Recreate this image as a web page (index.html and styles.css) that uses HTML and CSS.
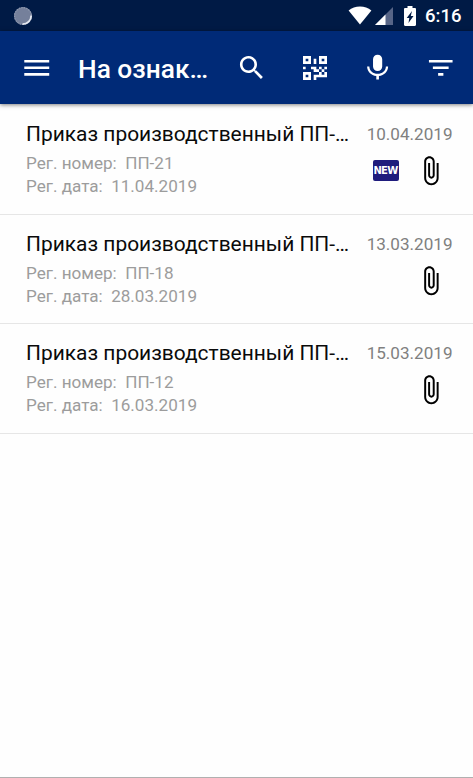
FILE: index.html
```
<!DOCTYPE html>
<html lang="ru">
<head>
    <meta charset="UTF-8">
    <meta name="viewport" content="width=device-width, initial-scale=1.0">
    <title>На ознакомление</title>
    <link rel="stylesheet" href="styles.css">
</head>
<body>
    <!-- Shared icons -->
    <svg class="sprite" width="0" height="0">
        <symbol id="clip" viewBox="0 0 24 24">
            <path d="M16.5 6v11.5c0 2.21-1.79 4-4 4s-4-1.79-4-4V5c0-1.38 1.12-2.5 2.5-2.5s2.5 1.12 2.5 2.5v10.5c0 .55-.45 1-1 1s-1-.45-1-1V6H10v9.5c0 1.38 1.12 2.5 2.5 2.5s2.5-1.12 2.5-2.5V5c0-2.21-1.79-4-4-4S7 2.79 7 5v12.5c0 3.04 2.46 5.5 5.5 5.5s5.5-2.46 5.5-5.5V6h-1.5z"/>
        </symbol>
    </svg>

    <div class="status-bar">
        <svg class="sync" viewBox="0 0 20 20">
            <circle cx="10" cy="10" r="9" fill="#75809b"/>
            <circle cx="10" cy="10" r="8.4" fill="none" stroke="#8d97ad" stroke-width="1.2" stroke-dasharray="1.5 1"/>
            <path d="M18.2 9.5A8.6 8.6 0 0 1 9.5 18.2" fill="none" stroke="#e4e8f0" stroke-width="1.8"/>
        </svg>
        <svg class="wifi" viewBox="0 0 24 19">
            <path d="M12 18.5L.6 4.6C3.7 2 7.7.6 12 .6s8.3 1.4 11.4 4z" fill="#fff"/>
        </svg>
        <svg class="signal" viewBox="0 0 18 18">
            <path d="M0 18L18 0v18z" fill="#576587"/>
            <path d="M0 18L10.5 7.5V18z" fill="#fff"/>
        </svg>
        <svg class="battery" viewBox="0 0 12 20">
            <path d="M1.2 2H3.5V0h5v2h2.3c.7 0 1.2.5 1.2 1.2v15.6c0 .7-.5 1.2-1.2 1.2H1.2C.5 20 0 19.5 0 18.8V3.2C0 2.5.5 2 1.2 2z" fill="#fff"/>
            <path d="M8 5L2.7 12H5.3L4.5 17L9.5 10H6.8z" fill="#001a45"/>
        </svg>
        <span class="clock">6:16</span>
    </div>

    <header class="toolbar">
        <svg class="icon menu" viewBox="0 0 24 24">
            <path d="M2.5 18h19v-2h-19v2zm0-5h19v-2h-19v2zm0-7v2h19V6h-19z"/>
        </svg>
        <h1>На ознак…</h1>
        <div class="actions">
            <svg class="icon" viewBox="0 0 24 24">
                <path d="M15.5 14h-.79l-.28-.27C15.41 12.59 16 11.11 16 9.5 16 5.91 13.09 3 9.5 3S3 5.91 3 9.5 5.91 16 9.5 16c1.61 0 3.09-.59 4.23-1.57l.27.28v.79l5 4.99L20.49 19l-4.99-5zm-6 0C7.01 14 5 11.99 5 9.5S7.01 5 9.5 5 14 7.01 14 9.5 11.99 14 9.5 14z"/>
            </svg>
            <!-- 9x9 module grid -->
            <svg class="qr" viewBox="0 0 9 9">
                <path fill-rule="evenodd" d="M0 0h3v3H0zM1 1v1h1V1zM6 0h3v3H6zM7 1v1h1V1zM0 6h3v3H0zM1 7v1h1V7z"/>
                <path d="M4 1h1v2H4zM0 4h1v1H0zM3 4h2v2H4V5H3zM6 4h1v1H6zM8 4h1v1H8zM7 5h1v1H7zM5 5h1v1H5zM6 6h1v1H6zM8 6h1v2H8zM4 7h2v1H5v1H4zM6 8h2V7H7v1zM6 7h1v1H6z"/>
            </svg>
            <svg class="icon" viewBox="0 0 24 24">
                <path d="M12 14.5c2 0 3.5-1.55 3.5-3.5V5.5C15.5 3.5 14 2 12 2S8.500 3.5 8.500 5.500V11c0 1.950 1.500 3.500 3.500 3.500zm6.300-3.500c0 3.400-2.900 5.600-6.300 5.600S5.700 14.400 5.700 11H4c0 3.900 3.100 6.800 7 7.300V21h2v-2.700c3.900-.5 7-3.400 7-7.300h-1.700z" transform="translate(-.1 0) scale(1 1)"/>
            </svg>
            <svg class="icon" viewBox="0 0 24 24">
                <path d="M10 18h4v-2h-4v2zM3 6v2h18V6H3zm3 7h12v-2H6v2z"/>
            </svg>
        </div>
    </header>

    <main class="list">
        <article class="item">
            <div class="info">
                <h2>Приказ производственный ПП-…</h2>
                <p>Рег. номер:&nbsp; ПП-21</p>
                <p>Рег. дата:&nbsp; 11.04.2019</p>
            </div>
            <div class="side">
                <time>10.04.2019</time>
                <div class="marks">
                    <span class="badge">NEW</span>
                    <svg class="clip"><use href="#clip"/></svg>
                </div>
            </div>
        </article>

        <article class="item">
            <div class="info">
                <h2>Приказ производственный ПП-…</h2>
                <p>Рег. номер:&nbsp; ПП-18</p>
                <p>Рег. дата:&nbsp; 28.03.2019</p>
            </div>
            <div class="side">
                <time>13.03.2019</time>
                <div class="marks">
                    <svg class="clip"><use href="#clip"/></svg>
                </div>
            </div>
        </article>

        <article class="item">
            <div class="info">
                <h2>Приказ производственный ПП-…</h2>
                <p>Рег. номер:&nbsp; ПП-12</p>
                <p>Рег. дата:&nbsp; 16.03.2019</p>
            </div>
            <div class="side">
                <time>15.03.2019</time>
                <div class="marks">
                    <svg class="clip"><use href="#clip"/></svg>
                </div>
            </div>
        </article>
    </main>
</body>
</html>
```
FILE: styles.css
```
* {
    box-sizing: border-box;
}

body {
    font-family: Roboto, "Noto Sans", sans-serif;
    margin: 0;
    height: 778px;
    display: flex;
    flex-direction: column;
    background: #fefefe;
    border-bottom: 1px solid #b0b0b0;
    overflow: hidden;
}

svg {
    display: block;
    flex-shrink: 0;
}

h1, h2, p {
    margin: 0;
    white-space: nowrap;
}

.sprite {
    display: none;
}

.status-bar {
    height: 31px;
    flex-shrink: 0;
    display: flex;
    align-items: center;
    padding: 0 11px 0 13px;
    background: #001a45;
    color: #fff;
}

.sync {
    width: 20px;
    height: 20px;
    margin-right: auto;
}

.wifi {
    width: 24px;
    height: 19px;
    margin-right: 3px;
}

.signal {
    width: 18px;
    height: 18px;
    margin-right: 11px;
}

.battery {
    width: 12px;
    height: 20px;
    margin-right: 9px;
}

.clock {
    width: 37px;
    font-size: 18.5px;
    font-weight: 500;
}

.toolbar {
    height: 73px;
    flex-shrink: 0;
    display: flex;
    align-items: center;
    background: #002a77;
    color: #fff;
    box-shadow: 0 1px 4px rgba(0, 0, 0, 0.5);
}

.icon {
    width: 31.5px;
    height: 31.5px;
    fill: #fff;
}

.menu {
    margin: 0 26px 0 20.5px;
}

h1 {
    padding-top: 2px;
    font-size: 26.3px;
    font-weight: 500;
    line-height: 32px;
}

.actions {
    margin-left: auto;
    margin-right: 1px;
    width: 252px;
    display: grid;
    grid-template-columns: repeat(4, 1fr);
    align-items: center;
    justify-items: center;
}

.qr {
    width: 24px;
    height: 24px;
    fill: #fff;
}

.list {
    padding-top: 1px;
}

.item {
    height: 109.5px;
    display: flex;
    justify-content: space-between;
    padding: 16px 20.5px 0 26px;
    border-bottom: 1px solid #e6e6e6;
}

h2 {
    font-size: 20.95px;
    font-weight: 400;
    line-height: 26px;
    margin-bottom: 5px;
    color: #0a0a0a;
}

p {
    font-size: 17.1px;
    line-height: 23px;
    color: #9c9c9c;
}

.side {
    display: flex;
    flex-direction: column;
    align-items: flex-end;
}

time {
    font-size: 17.1px;
    line-height: 27px;
    color: #808080;
}

.marks {
    display: flex;
    align-items: center;
    gap: 16px;
    padding: 7px 6.5px 0 0;
}

.badge {
    width: 26px;
    height: 21px;
    border-radius: 2px;
    background: #1f1c7d;
    color: #fff;
    font-family: "DejaVu Sans", sans-serif;
    font-size: 10px;
    font-weight: 700;
    letter-spacing: -0.7px;
    line-height: 21px;
    text-align: center;
}

.clip {
    width: 31.5px;
    height: 31.5px;
}
```
